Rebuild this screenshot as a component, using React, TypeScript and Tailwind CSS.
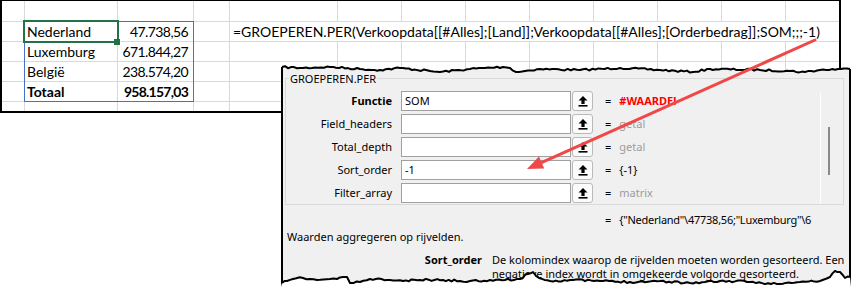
import React from "react";

function rng(seed: number) {
  let s = seed;
  return () => {
    s = (s * 16807) % 2147483647;
    return (s - 1) / 2147483646;
  };
}

function jag(keys: [number, number][], seed: number, amp: number): [number, number][] {
  const r = rng(seed);
  const pts: [number, number][] = [];
  for (let i = 0; i < keys.length - 1; i++) {
    const [x0, y0] = keys[i];
    const [x1, y1] = keys[i + 1];
    const steps = Math.max(1, Math.round((x1 - x0) / 3));
    for (let k = 0; k < steps; k++) {
      const t = k / steps;
      const x = x0 + (x1 - x0) * t;
      const y = y0 + (y1 - y0) * t + (k === 0 ? 0 : (r() - 0.5) * amp);
      pts.push([x, y]);
    }
  }
  pts.push(keys[keys.length - 1]);
  return pts;
}

const TOP = jag(
  [
    [282, 67], [300, 68], [330, 67], [360, 69], [380, 70], [400, 68], [430, 71], [440, 72],
    [470, 69], [503, 67], [510, 68], [516, 72], [540, 69], [580, 70], [620, 68], [660, 70],
    [693, 72], [710, 69], [760, 70], [790, 71], [805, 72], [820, 70], [841, 69], [850, 69],
  ],
  7,
  2
);

const BOTTOM = jag(
  [
    [282, 283], [287, 281], [293, 279], [303, 278], [310, 279], [317, 280], [330, 279], [337, 279],
    [343, 277], [347, 277], [350, 283], [360, 282], [370, 279], [390, 280], [403, 281], [420, 280],
    [443, 280], [460, 281], [470, 281], [490, 280], [505, 280], [520, 279], [528, 274], [533, 272],
    [539, 278], [550, 281], [570, 280], [600, 281], [630, 282], [660, 281], [690, 283], [720, 281],
    [750, 282], [780, 284], [800, 282], [820, 281], [830, 277], [835, 271], [840, 272], [845, 278], [850, 277],
  ],
  11,
  2.2
);

const ptsStr = (p: [number, number][]) => p.map(([x, y]) => `${x.toFixed(1)},${y.toFixed(1)}`).join(" ");

const W = [23, 93, 76, 36, 108, 64, 64, 64, 64, 64, 64, 64];
const GRID = "border-[#d9d9d9]";

function Cells({ from }: { from: number }) {
  return (
    <>
      {W.slice(from).map((w, i) => (
        <div key={i} className={`h-full shrink-0 border-r ${GRID}`} style={{ width: w }} />
      ))}
      <div className="h-full flex-1" />
    </>
  );
}

function DataRow({ label, value, bold }: { label: string; value: string; bold?: boolean }) {
  return (
    <div className={`h-[20px] flex border-b ${GRID} leading-[19px] ${bold ? "font-bold" : ""}`}>
      <div className={`w-[23px] shrink-0 border-r ${GRID}`} />
      <div className={`w-[93px] shrink-0 border-r ${GRID} pl-[2px] whitespace-nowrap`}>{label}</div>
      <div
        className={`w-[76px] shrink-0 border-r ${GRID} pr-[5px] text-right whitespace-nowrap ${
          bold ? "tracking-[-0.75px]" : "tracking-[-0.6px]"
        }`}
      >
        {value}
      </div>
      <Cells from={3} />
    </div>
  );
}

function Sheet() {
  return (
    <div className="w-[841px] h-[113px] border-x-2 border-t border-b-2 border-black flex flex-col font-['Lato',sans-serif] text-[14px] text-black">
      <div className={`h-[21px] flex border-b ${GRID}`}>
        <Cells from={0} />
      </div>
      <div className={`h-[20px] flex border-b ${GRID} leading-[19px]`}>
        <div className={`w-[23px] shrink-0 border-r ${GRID}`} />
        <div className={`w-[93px] shrink-0 border-r ${GRID} pl-[2px]`}>Nederland</div>
        <div className={`w-[76px] shrink-0 border-r ${GRID} pr-[5px] text-right tracking-[-0.6px]`}>47.738,56</div>
        <div className={`w-[36px] shrink-0 border-r ${GRID}`} />
        <div className="flex-1 pl-[3px] whitespace-nowrap">
          =GROEPEREN.PER(Verkoopdata[[#Alles];[Land]];Verkoopdata[[#Alles];[Orderbedrag]];SOM;;;-1)
        </div>
      </div>
      <DataRow label="Luxemburg" value="671.844,27" />
      <DataRow label="België" value="238.574,20" />
      <DataRow label="Totaal" value="958.157,03" bold />
      <div className="h-[9px] flex">
        <Cells from={0} />
      </div>
    </div>
  );
}

function UpIcon() {
  return (
    <svg width="10" height="12" viewBox="0 0 10 12">
      <polygon points="5,1 9.5,5.5 6.6,5.5 6.6,9 3.4,9 3.4,5.5 0.5,5.5" fill="#000" />
      <rect x="0.5" y="10" width="9" height="1.6" fill="#000" />
    </svg>
  );
}

type Arg = { label: string; value: string; input?: string; bold?: boolean; kind: "err" | "hint" | "val" };
const ARGS: Arg[] = [
  { label: "Functie", input: "SOM", value: "#WAARDE!", bold: true, kind: "err" },
  { label: "Field_headers", value: "getal", kind: "hint" },
  { label: "Total_depth", value: "getal", kind: "hint" },
  { label: "Sort_order", input: "-1", value: "{-1}", kind: "val" },
  { label: "Filter_array", value: "matrix", kind: "hint" },
];

function ArgRow({ a }: { a: Arg }) {
  const valCls =
    a.kind === "err" ? "text-[#ff0000] font-bold" : a.kind === "hint" ? "text-[#9c9c9c]" : "text-black";
  return (
    <div className="h-[20px] flex items-center">
      <div className={`w-[106px] shrink-0 text-right whitespace-nowrap ${a.bold ? "font-bold" : ""}`}>{a.label}</div>
      <div className="ml-[9px] w-[170px] h-[20px] shrink-0 border border-[#a0a0a0] bg-white pl-[3px] flex items-center">
        {a.input}
      </div>
      <div className="ml-[1px] w-[21px] h-[20px] shrink-0 rounded-[3px] border border-[#b9b9b9] bg-[#fbfbfb] flex items-center justify-center">
        <UpIcon />
      </div>
      <div className="ml-[12px]">=</div>
      <div className={`ml-[8px] whitespace-nowrap ${valCls}`}>{a.value}</div>
    </div>
  );
}

function Dialog() {
  return (
    <div className="absolute left-[281px] top-[74px] w-[570px] h-[213px] border-x-2 border-black bg-[#f0f0f0] font-['Noto_Sans',sans-serif] text-[11px] leading-[14px] text-black">
      <div className="relative ml-[2px] mt-[4px] mr-[5px] h-[127px] border border-[#dadada] flex">
        <div className="absolute left-[3px] -top-[5px] px-[1px] bg-[#f0f0f0] leading-[10px] whitespace-nowrap">
          GROEPEREN.PER
        </div>
        <div className="flex-1 pt-[12px] flex flex-col gap-[3px]">
          {ARGS.map((a) => (
            <ArgRow key={a.label} a={a} />
          ))}
        </div>
        <div className="w-[23px] mt-[13px] border-l border-white">
          <div className="ml-[7px] mt-[35px] w-[2px] h-[48px] bg-[#8a8a8a]" />
        </div>
      </div>
      <div className="mt-[8px] pl-[322px] flex whitespace-nowrap">
        <span>=</span>
        <span className="ml-[8px] tracking-[-0.25px]">{'{"Nederland"\\47738,56;"Luxemburg"\\6'}</span>
      </div>
      <div className="mt-[3px] pl-[4px] whitespace-nowrap">Waarden aggregeren op rijvelden.</div>
      <div className="mt-[9px] flex">
        <div className="w-[199px] shrink-0 text-right font-bold">Sort_order</div>
        <div className="ml-[10px] whitespace-nowrap">
          <div>De kolomindex waarop de rijvelden moeten worden gesorteerd. Een</div>
          <div>negatieve index wordt in omgekeerde volgorde gesorteerd.</div>
        </div>
      </div>
    </div>
  );
}

function Overlay() {
  const topPoly = ptsStr([...TOP, [850, 74], [282, 74]]);
  const botPoly = ptsStr([...BOTTOM, [851, 287], [281, 287]]);
  const t0 = TOP[0];
  const t1 = TOP[TOP.length - 1];
  const b0 = BOTTOM[0];
  const b1 = BOTTOM[BOTTOM.length - 1];
  const sx = 815, sy = 40, tx = 527, ty = 169;
  const dx = tx - sx, dy = ty - sy;
  const len = Math.hypot(dx, dy);
  const ux = dx / len, uy = dy / len;
  const hl = 16, hw = 6.5;
  const bx = tx - ux * hl, by = ty - uy * hl;
  const nx = -uy, ny = ux;
  const head = `${tx},${ty} ${bx + nx * hw},${by + ny * hw} ${bx - nx * hw},${by - ny * hw}`;
  return (
    <svg className="absolute inset-0 pointer-events-none" width="851" height="287" viewBox="0 0 851 287">
      <polygon points={topPoly} fill="#f0f0f0" />
      <polyline points={ptsStr(TOP)} fill="none" stroke="#000" strokeWidth="2" strokeLinejoin="round" />
      <line x1="282" y1={t0[1]} x2="282" y2="75" stroke="#000" strokeWidth="2" />
      <line x1="850" y1={t1[1]} x2="850" y2="75" stroke="#000" strokeWidth="2" />
      <polygon points={botPoly} fill="#fff" />
      <polyline points={ptsStr(BOTTOM)} fill="none" stroke="#000" strokeWidth="2" strokeLinejoin="round" />
      <line x1="282" y1="270" x2="282" y2={b0[1]} stroke="#000" strokeWidth="2" />
      <line x1="850" y1="265" x2="850" y2={b1[1]} stroke="#000" strokeWidth="2" />
      <line x1={sx} y1={sy} x2={bx + ux * 2} y2={by + uy * 2} stroke="#f04848" strokeWidth="3" strokeLinecap="round" />
      <polygon points={head} fill="#f04848" />
    </svg>
  );
}

export default function App() {
  return (
    <div className="relative w-[851px] h-[287px] overflow-hidden bg-white">
      <Sheet />
      <div className="absolute left-[24px] top-[21px] w-[170px] h-[81px] border border-[#4472c4]" />
      <div className="absolute left-[23px] top-[20px] w-[96px] h-[23px] border-2 border-[#217346]" />
      <div className="absolute left-[114px] top-[39px] w-[6px] h-[6px] bg-[#217346]" />
      <Dialog />
      <Overlay />
    </div>
  );
}
